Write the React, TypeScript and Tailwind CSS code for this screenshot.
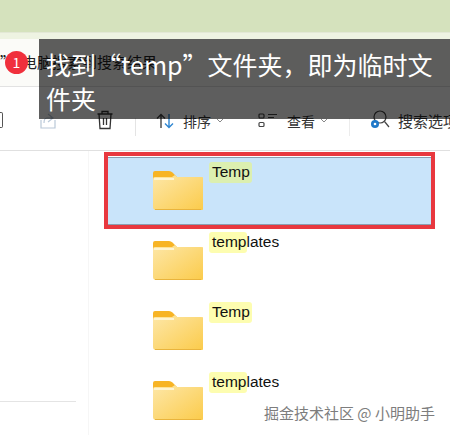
import React from 'react';

const CJK = 'font-["Noto_Sans_CJK_SC","Liberation_Sans",sans-serif]';

const Folder: React.FC = () => (
  <svg width="50" height="39" viewBox="0 0 50 39" className="shrink-0 block">
    <defs>
      <linearGradient id="folderFill" x1="0" y1="0" x2="1" y2="1">
        <stop offset="0" stopColor="#fde7a8" />
        <stop offset="1" stopColor="#fbcb4a" />
      </linearGradient>
    </defs>
    <path d="M2 0h14q2 0 3.500 1.500L24 6H30V10H0V2q0-2 2-2z" fill="#f7b425" />
    <path d="M0 8q0-2 2-2h17l3-2 2 2h24q3 0 3 2v28q0 3-3 3H3q-3 0-3-3z" fill="url(#folderFill)" />
    <rect x="1" y="7" width="20" height="2" fill="#fff4d0" />
    <rect x="2" y="38" width="46" height="1" fill="#e9b43c" />
  </svg>
);

const FolderRow: React.FC<{ hit: string; rest?: string; hitWidth: string; hitColor: string }> = ({ hit, rest, hitWidth, hitColor }) => (
  <div className="flex items-start h-[70px] pl-[153px]">
    <div className="mt-[16px]">
      <Folder />
    </div>
    <div className="ml-[9px] mt-[7px] relative text-[15.500px] leading-[20px] text-[#111] font-['Liberation_Sans',sans-serif]">
      <span className={`absolute -left-[3px] top-0 h-[21px] rounded-[3px] ${hitWidth} ${hitColor}`} />
      <span className="relative">
        {hit}
        {rest}
      </span>
    </div>
  </div>
);

const Chevron: React.FC<{ className: string }> = ({ className }) => (
  <svg width="8" height="6" viewBox="0 0 8 6" className={className} fill="none" stroke="#888">
    <path d="M1 1l3 3 3-3" />
  </svg>
);

export default function App() {
  return (
    <div className={`relative w-[450px] h-[435px] overflow-hidden bg-white ${CJK}`}>
      <div className="h-[32px] bg-[#d5e2bd]" />
      <div className="h-[7px] bg-[#eef3e2] border-t border-[#e3e8d6]" />
      <div className="h-[48px] bg-[#fbfbf8] border-b border-[#e2e2e2] flex items-center text-[15px] text-[#222] whitespace-nowrap">
        <span className="w-[22px]">”</span>
        <span>电脑搜索到搜索结果</span>
      </div>

      {/* toolbar */}
      <div className="h-[64px] flex items-start overflow-hidden pt-[23px] text-[14px] leading-[20px] text-[#333] border-b border-[#e0e0e0] whitespace-nowrap [&>*]:shrink-0">
        <div className="w-[3px] h-[16px] border border-l-0 border-[#555] rounded-r-[2px] mt-[2px]" />
        <svg width="16" height="16" viewBox="0 0 16 16" className="ml-[37px] mt-[3px]" fill="none" stroke="#b9c8d8" strokeWidth="1.200">
          <path d="M1 7v8h14V7M8 1l5 4-5 4M13 5H7q-3 0-3 5" />
        </svg>
        <svg width="16" height="20" viewBox="0 0 16 20" className="ml-[41px]" fill="none" stroke="#333" strokeWidth="1.300">
          <path d="M0.500 4h15M5 4V1.500h6V4M2 4l1 14.500h10L14 4M6.500 8v7M9.500 8v7" />
        </svg>
        <div className="ml-[22px] w-px h-[18px] bg-[#e4e4e4] mt-[8px]" />
        <svg width="18" height="16" viewBox="0 0 18 16" className="ml-[20px] mt-[3px]" fill="none" strokeWidth="1.400">
          <path d="M5 15V1.500M1 5.500l4-4 4 4" stroke="#444" />
          <path d="M13 1v13.500M9 10.500l4 4 4-4" stroke="#2f86d1" />
        </svg>
        <span className="ml-[9px] mt-[1px]">排序</span>
        <Chevron className="ml-[5px] mt-[8px]" />
        <svg width="20" height="15" viewBox="0 0 20 15" className="ml-[34px] mt-[3px]" fill="none" stroke="#444" strokeWidth="1.200">
          <rect x="1" y="1" width="5" height="4" rx="1" />
          <rect x="1" y="9.500" width="5" height="4" rx="1" />
          <path d="M10 1.500h9M10 4.500h6" />
        </svg>
        <span className="ml-[9px] mt-[1px]">查看</span>
        <Chevron className="ml-[5px] mt-[8px]" />
        <div className="ml-[21px] w-px h-[18px] bg-[#ececec] mt-[8px]" />
        <svg width="20" height="20" viewBox="0 0 20 20" className="ml-[20px]" fill="none">
          <circle cx="10" cy="7" r="6" stroke="#444" strokeWidth="1.200" />
          <path d="M14.500 11.500L19 17" stroke="#444" strokeWidth="1.200" />
          <circle cx="5" cy="14" r="4" fill="#1f78c8" />
          <circle cx="5" cy="14" r="1.300" fill="#fff" />
        </svg>
        <span className="ml-[8px] mt-[1px] text-[15px]">搜索选项</span>
      </div>

      {/* file list */}
      <div className="relative h-[284px] pt-[4px]">
        <div className="absolute left-0 top-[250px] w-[76px] h-px bg-[#e4e4e4]" />
        <div className="absolute left-[88px] top-0 h-full w-px bg-[#f6f6f6]" />
        <div className="absolute left-[106px] top-[6px] w-[328px] h-[68px] bg-[#c9e4fa] border-y border-[#8c9db0]" />
        <div className="relative">
          <FolderRow hit="Temp" hitWidth="w-[43px]" hitColor="bg-[#dcefb0]" />
          <FolderRow hit="temp" rest="lates" hitWidth="w-[38px]" hitColor="bg-[#fdfdb0]" />
          <FolderRow hit="Temp" hitWidth="w-[43px]" hitColor="bg-[#fdfdb0]" />
          <FolderRow hit="temp" rest="lates" hitWidth="w-[38px]" hitColor="bg-[#fdfdb0]" />
        </div>
      </div>

      {/* overlays */}
      <div className="absolute left-[104px] top-[152px] w-[331px] h-[77px] border-[4px] border-[#e8383f]" />
      <div className="absolute left-[39px] top-[39px] w-[411px] h-[80px] bg-black/[0.63] pl-[7px] pr-[10px] pt-[8px] text-[25px] leading-[34px] text-white">
        找到“temp”文件夹，即为临时文件夹
      </div>
      <div className="absolute left-[5px] top-[51px] w-[23px] h-[23px] rounded-full bg-[#f0303c] flex items-center justify-center text-[14px] text-white">
        1
      </div>
      <div className="absolute left-[264px] top-[403px] text-[15px] leading-[20px] text-[#7d7d7d] whitespace-nowrap">
        掘金技术社区 @ 小明助手
      </div>
    </div>
  );
}
